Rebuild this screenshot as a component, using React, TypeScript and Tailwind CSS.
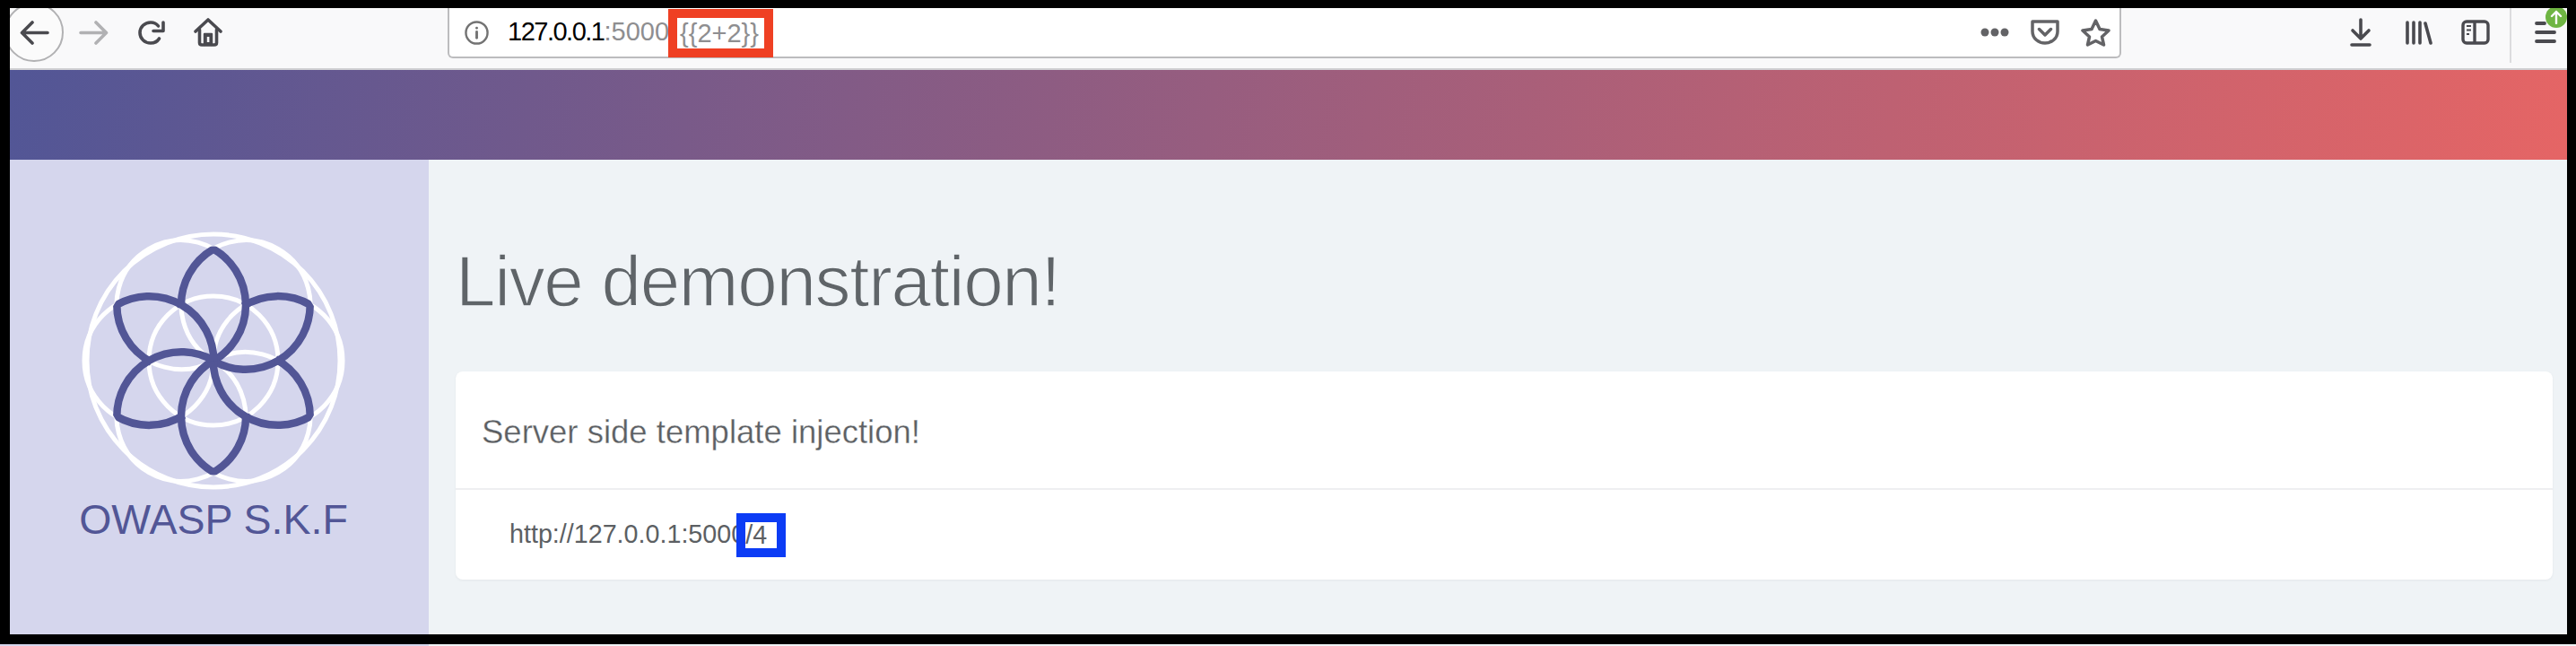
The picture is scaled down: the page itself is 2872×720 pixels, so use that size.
import { Fragment } from "react";

const sans = { fontFamily: '"Liberation Sans", Arial, sans-serif' };

function Petals() {
  return (
    <svg viewBox="-150 -150 300 300" className="h-[300px] w-[300px]">
      <defs>
        <clipPath id="petal-clip">
          <circle cx="0" cy="0" r="127.5" />
        </clipPath>
      </defs>
      <g fill="none" stroke="#ffffff" strokeWidth="5">
        <circle cx="0" cy="0" r="141" />
        <circle cx="0" cy="0" r="72" />
        {[0, 60, 120, 180, 240, 300].map((a) => (
          <circle key={a} cx="72" cy="0" r="72" transform={`rotate(${a})`} />
        ))}
      </g>
      <g fill="none" stroke="#525696" strokeWidth="8.5" strokeMiterlimit="10" clipPath="url(#petal-clip)">
        {[0, 60, 120, 180, 240, 300].map((a) => (
          <path key={a} transform={`rotate(${a})`} d="M-36 -59 A72 72 0 0 1 0 -124.4 A72 72 0 0 1 0 0.3" />
        ))}
      </g>
    </svg>
  );
}

function NavIcons() {
  return (
    <Fragment>
      <div className="-ml-[6px] flex h-[66px] w-[66px] shrink-0 items-center justify-center rounded-full border-2 border-[#b1b1b3] bg-[#fbfbfb]">
        <svg viewBox="0 0 33 27" className="h-[27px] w-[33px]" fill="none" stroke="#4a4a4f" strokeWidth="3.6" strokeLinecap="round" strokeLinejoin="round">
          <path d="M31 13.5H3M14 2L2.5 13.5L14 25" />
        </svg>
      </div>
      <svg viewBox="0 0 33 27" className="ml-[17px] h-[27px] w-[33px]" fill="none" stroke="#b1b1b3" strokeWidth="3.6" strokeLinecap="round" strokeLinejoin="round">
        <path d="M2 13.5H30M19 2L30.5 13.5L19 25" />
      </svg>
      <svg viewBox="0 0 30 27" className="ml-[33px] h-[27px] w-[30px]" fill="none" stroke="#4a4a4f" strokeWidth="3.6" strokeLinecap="round" strokeLinejoin="round">
        <path d="M22.5 6C20.5 3.4 17.5 2 14 2C7.4 2 2 7 2 13.5C2 20 7.4 25 14 25C18 25 21.5 23.2 23.5 20" />
        <path d="M28 2V11.5H17" />
      </svg>
      <svg viewBox="0 0 32 32" className="ml-[32px] h-[32px] w-[32px]" fill="none" stroke="#4a4a4f" strokeWidth="3.6" strokeLinejoin="round" strokeLinecap="round">
        <path d="M2 15L16 2L30 15" />
        <path d="M6.5 13V27.5C6.5 29 7.5 30 9 30H23C24.5 30 25.5 29 25.5 27.5V13" />
        <path d="M12 30V18H20V30" strokeWidth="2.4" fill="#4a4a4f" />
        <rect x="14.8" y="21" width="2.6" height="6" fill="#f9f9fa" stroke="none" />
      </svg>
    </Fragment>
  );
}

function UrlBar() {
  return (
    <div className="ml-[251px] flex h-[56px] w-[1866px] shrink-0 items-center rounded-b-[6px] border-2 border-t-0 border-[#bcbcbe] bg-white pl-[17px] text-[29px] text-[#8e8e90]">
      <svg viewBox="0 0 28 28" className="h-[27px] w-[27px]" fill="none" stroke="#737373" strokeWidth="2.5" strokeLinecap="round">
        <circle cx="14" cy="14" r="12.5" />
        <path d="M14 13V20" strokeWidth="3" />
        <circle cx="14" cy="8.5" r="1.5" fill="#737373" stroke="none" />
      </svg>
      <div className="ml-[21px] flex items-center whitespace-nowrap">
        <span className="tracking-[-1.5px] text-black">127.0.0.1</span>
        <span>:5000</span>
        <span className="-ml-px mt-[2px] inline-block h-[54px] w-[117px] border-[10px] border-[#ef4023] bg-white pl-[3px] leading-[34px]">
          {"{{2+2}}"}
        </span>
      </div>
      <div className="ml-auto flex items-center pr-[10px]">
        <svg viewBox="0 0 32 10" className="h-[10px] w-[32px]" fill="#636366">
          <circle cx="5" cy="5" r="4.5" />
          <circle cx="16" cy="5" r="4.5" />
          <circle cx="27" cy="5" r="4.5" />
        </svg>
        <svg viewBox="0 0 32 28" className="ml-[24px] h-[28px] w-[32px]" fill="none" stroke="#636366" strokeWidth="3.5" strokeLinejoin="round" strokeLinecap="round">
          <path d="M2 2H30V13C30 21 23 26 16 26C9 26 2 21 2 13Z" />
          <path d="M9.5 10.5L16 17L22.5 10.5" />
        </svg>
        <svg viewBox="0 0 33 31" className="ml-[24px] h-[31px] w-[33px]" fill="none" stroke="#636366" strokeWidth="3.5" strokeLinejoin="round">
          <path d="M16.5 2L21 11.5L31 13L23.5 20L25.5 29L16.5 24.5L7.5 29L9.5 20L2 13L12 11.5Z" />
        </svg>
      </div>
    </div>
  );
}

function RightIcons() {
  return (
    <div className="relative flex flex-1 items-center self-stretch pl-[255px]">
      <svg viewBox="0 0 24 32" className="h-[32px] w-[24px]" fill="none" stroke="#4a4a4f" strokeWidth="3.6" strokeLinecap="round" strokeLinejoin="round">
        <path d="M12 2V22M3 14L12 23L21 14M2 30H22" />
      </svg>
      <svg viewBox="0 0 30 27" className="ml-[38px] h-[27px] w-[30px]" fill="none" stroke="#4a4a4f" strokeWidth="3.6" strokeLinecap="round">
        <path d="M2 2V25M9 2V25M16 2V25M22 3L28 25" />
      </svg>
      <svg viewBox="0 0 32 28" className="ml-[32px] h-[28px] w-[32px]" fill="none" stroke="#4a4a4f" strokeWidth="3.4" strokeLinejoin="round">
        <rect x="2" y="2" width="28" height="24" rx="4" />
        <path d="M15 2V26" />
        <path d="M6 7H11M6 11.5H11M6 16H9" strokeWidth="2.2" />
      </svg>
      <div className="ml-[22px] h-[61px] w-[2px] self-start bg-[#dcdcde]" />
      <svg viewBox="0 0 24 24" className="ml-[26px] h-[24px] w-[24px]" fill="none" stroke="#4a4a4f" strokeWidth="3.8" strokeLinecap="round">
        <path d="M2 2H11M2 12H22M2 22H22" />
      </svg>
      <div className="absolute -top-[2px] right-0 flex h-[24px] w-[24px] items-center justify-center rounded-full bg-[#6fb543]">
        <svg viewBox="0 0 14 16" className="h-[16px] w-[14px]" fill="none" stroke="#ffffff" strokeWidth="2.4" strokeLinecap="round" strokeLinejoin="round">
          <path d="M7 15V2M2 7L7 2L12 7" />
        </svg>
      </div>
    </div>
  );
}

export default function App() {
  return (
    <div className="h-[720px] w-[2872px] overflow-hidden bg-[#eff3f6]" style={sans}>
      <div className="flex h-[718px] w-full flex-col overflow-hidden border-b-[11px] border-l-[11px] border-r-[10px] border-t-[9px] border-black">
        <div className="flex h-[69px] shrink-0 items-center overflow-hidden border-b-2 border-[#d0d0d3] bg-[#f9f9fa] pb-[13px]">
          <NavIcons />
          <div className="self-start">
            <UrlBar />
          </div>
          <RightIcons />
        </div>
        <div className="h-[100px] shrink-0 bg-[linear-gradient(100deg,#525696,#e56565)]" />
        <div className="flex min-h-0 flex-1">
          <aside className="flex w-[467px] shrink-0 flex-col items-center bg-[#d5d6ed] pr-[13px] pt-[74px]">
            <Petals />
            <div className="text-[46.5px] leading-[54px] text-[#525696]">OWASP S.K.F</div>
          </aside>
          <main className="flex-1 pl-[29px] pr-[16px]">
            <h1 className="mt-[92px] ml-[1px] text-[80px] leading-[88px] tracking-[-1.3px] text-[#5f6468] [-webkit-text-stroke:1.5px_#eff3f6]">
              Live demonstration!
            </h1>
            <div className="ml-[1px] mt-[56px] rounded-[8px] bg-white text-[#5c5f63] shadow-[0_1px_3px_rgba(0,0,0,0.05)]">
              <div className="flex h-[132px] items-center border-b-2 border-[#eeeff1] pl-[29px] pt-[6px] text-[36.5px] [-webkit-text-stroke:0.3px_#ffffff]">
                Server side template injection!
              </div>
              <div className="flex h-[100px] items-center pl-[60px] text-[28.7px]">
                <span>http://127.0.0.1:5000</span>
                <span className="-ml-[10px] inline-block h-[49px] w-[55px] border-[10px] border-[#0c3cf5] bg-white leading-[29px]">/4</span>
              </div>
            </div>
          </main>
        </div>
      </div>
      <div className="flex h-[2px]">
        <div className="w-[478px] bg-[#d5d6ed]" />
      </div>
    </div>
  );
}
